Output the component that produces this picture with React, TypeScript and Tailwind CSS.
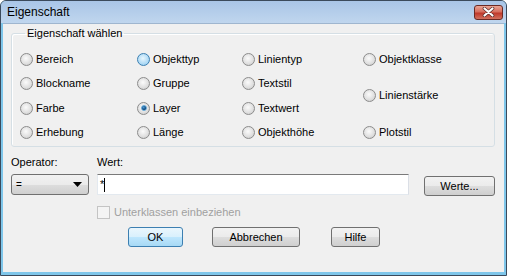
import React from 'react';

type RadioState = 'off' | 'hover' | 'on';

const Radio = ({ label, state = 'off' }: { label: string; state?: RadioState }) => (
  <div className="flex items-center gap-[3px]">
    <span
      className={
        state === 'hover'
          ? 'flex h-[13px] w-[13px] shrink-0 items-center justify-center rounded-full border border-[#3c7fb1] bg-[radial-gradient(circle_at_45%_40%,#e8f6fd,#a6d6f4_70%,#7cbde8)]'
          : 'flex h-[13px] w-[13px] shrink-0 items-center justify-center rounded-full border border-[#8c8c8c] bg-[radial-gradient(circle_at_45%_40%,#fbfbfb,#dedede_60%,#c2c2c2)]'
      }
    >
      {state === 'on' && (
        <span className="h-[6px] w-[6px] rounded-full border border-[#5ea3d3] bg-[radial-gradient(circle_at_40%_35%,#4d9bd6,#124a7e_60%,#082746)]" />
      )}
    </span>
    <span>{label}</span>
  </div>
);

const Button = ({ label, width, primary }: { label: string; width: string; primary?: boolean }) => (
  <button
    className={
      (primary
        ? 'border-[#3c7fb1] bg-[linear-gradient(#eaf6fd_0%,#d9f0fc_50%,#bee6fd_51%,#a7d9f5_100%)] '
        : 'border-[#707070] bg-[linear-gradient(#f2f2f2_0%,#ebebeb_50%,#dddddd_51%,#cfcfcf_100%)] ') +
      'flex h-[20px] items-center justify-center rounded-[3px] border text-black ' +
      width
    }
  >
    {label}
  </button>
);

export default function App() {
  return (
    <div className="flex h-[276px] w-[507px] flex-col overflow-hidden rounded-t-[6px] border border-[#3b4a5c] bg-[#7fc6ea] font-['Liberation_Sans',Arial,sans-serif] text-[11px] leading-[13px] text-black">
      {/* title bar */}
      <div className="flex h-[22px] shrink-0 items-center justify-between bg-[linear-gradient(#a9c5e7,#c0d6ee)] pl-[6px] pr-[3px]">
        <span className="text-[12px] leading-[14px]">Eigenschaft</span>
        <button className="flex h-[15px] w-[29px] items-center justify-center rounded-[3px] border border-[#6b2a24] bg-[linear-gradient(#eaa595_0%,#d66e5e_45%,#c0392b_55%,#d2705e_100%)]">
          <svg width="13" height="10" viewBox="0 0 13 10">
            <path d="M2.5 1.5 L10.5 8.5 M10.5 1.5 L2.5 8.5" stroke="#5a2a26" strokeWidth="3.6" strokeLinecap="round" />
            <path d="M2.5 1.5 L10.5 8.5 M10.5 1.5 L2.5 8.5" stroke="#ffffff" strokeWidth="2.2" strokeLinecap="round" />
          </svg>
        </button>
      </div>

      {/* client area */}
      <div className="mx-[2px] mb-[3px] flex flex-1 flex-col border-t border-[#9fb6cf] bg-[#f0f0f0]">
        <fieldset className="ml-[8px] mt-[3px] w-[484px] rounded-[3px] border border-[#d5dfe5] pb-[2px] pl-[8px] shadow-[inset_1px_1px_0_#ffffff]">
          <legend className="ml-[5px] px-[2px]">Eigenschaft wählen</legend>
          <div className="mt-[7px] grid grid-cols-[117px_105px_121px_1fr] grid-rows-[24px_25px_24px_24px]">
            <div className="flex items-center"><Radio label="Bereich" /></div>
            <div className="flex items-center"><Radio label="Objekttyp" state="hover" /></div>
            <div className="flex items-center"><Radio label="Linientyp" /></div>
            <div className="flex items-center"><Radio label="Objektklasse" /></div>

            <div className="flex items-center"><Radio label="Blockname" /></div>
            <div className="flex items-center"><Radio label="Gruppe" /></div>
            <div className="flex items-center"><Radio label="Textstil" /></div>
            <div className="row-span-2 flex items-center"><Radio label="Linienstärke" /></div>

            <div className="flex items-center"><Radio label="Farbe" /></div>
            <div className="flex items-center"><Radio label="Layer" state="on" /></div>
            <div className="flex items-center"><Radio label="Textwert" /></div>

            <div className="flex items-center"><Radio label="Erhebung" /></div>
            <div className="flex items-center"><Radio label="Länge" /></div>
            <div className="flex items-center"><Radio label="Objekthöhe" /></div>
            <div className="flex items-center"><Radio label="Plotstil" /></div>
          </div>
        </fieldset>

        <div className="mt-[9px] flex">
          <span className="ml-[8px] w-[86px]">Operator:</span>
          <span>Wert:</span>
        </div>

        <div className="mt-[5px] flex items-start">
          <div className="ml-[8px] flex h-[21px] w-[78px] items-center justify-between rounded-[3px] border border-[#707070] bg-[linear-gradient(#f2f2f2_0%,#ebebeb_50%,#dddddd_51%,#cfcfcf_100%)] pl-[4px] pr-[6px]">
            <span className="text-[10px]">=</span>
            <svg width="9" height="5" viewBox="0 0 9 5">
              <path d="M0 0 H9 L4.5 5 Z" fill="#000000" />
            </svg>
          </div>
          <div className="ml-[8px] flex h-[21px] w-[312px] items-center border border-[#7a7a7a] border-b-[#e3e9ef] border-l-[#e3e9ef] border-r-[#dbdfe6] bg-white pl-[2px]">
            <span className="leading-[11px]">*</span>
            <span className="h-[14px] w-px bg-black" />
          </div>
          <div className="ml-[15px] mt-[2px]">
            <Button label="Werte..." width="w-[71px]" />
          </div>
        </div>

        <div className="mt-[10px] flex items-center gap-[4px] pl-[94px] text-[#a0a0a0]">
          <span className="h-[13px] w-[13px] border border-[#c4c4c4] bg-[#f4f4f4]" />
          <span>Unterklassen einbeziehen</span>
        </div>

        <div className="mt-[8px] flex pl-[125px]">
          <Button label="OK" width="w-[55px]" primary />
          <div className="ml-[29px]">
            <Button label="Abbrechen" width="w-[88px]" />
          </div>
          <div className="ml-[31px]">
            <Button label="Hilfe" width="w-[49px]" />
          </div>
        </div>
      </div>
    </div>
  );
}
